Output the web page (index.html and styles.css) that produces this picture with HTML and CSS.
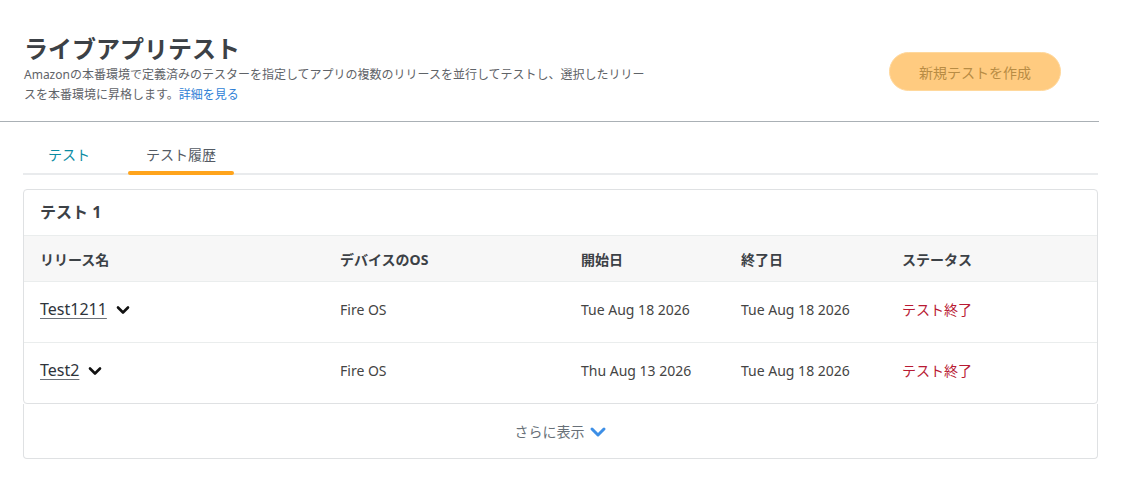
FILE: index.html
```html
<!DOCTYPE html>
<html lang="ja">
<head>
<meta charset="utf-8">
<title>ライブアプリテスト</title>
<link rel="stylesheet" href="styles.css">
</head>
<body>
<div class="page">
  <header class="page-header">
    <div class="intro">
      <h1 class="title">ライブアプリテスト</h1>
      <p class="desc">Amazonの本番環境で定義済みのテスターを指定してアプリの複数のリリースを並行してテストし、選択したリリー<br>スを本番環境に昇格します。<a class="link" href="#">詳細を見る</a></p>
    </div>
    <button class="btn-create" type="button">新規テストを作成</button>
  </header>

  <nav class="tabs">
    <a class="tab" href="#">テスト</a>
    <a class="tab active" href="#">テスト履歴</a>
  </nav>

  <section class="card">
    <h2 class="card-title">テスト 1</h2>
    <div class="row head">
      <div>リリース名</div>
      <div>デバイスのOS</div>
      <div>開始日</div>
      <div>終了日</div>
      <div>ステータス</div>
    </div>
    <div class="row">
      <div class="name"><a href="#">Test1211</a><svg class="chev" width="14" height="10" viewBox="0 0 14 10"><path d="M2 2.5 L7 7.5 L12 2.5" fill="none" stroke="#111" stroke-width="2.6" stroke-linecap="round" stroke-linejoin="round"/></svg></div>
      <div>Fire OS</div>
      <div>Tue Aug 18 2026</div>
      <div>Tue Aug 18 2026</div>
      <div class="status">テスト終了</div>
    </div>
    <div class="row last">
      <div class="name"><a href="#">Test2</a><svg class="chev" width="14" height="10" viewBox="0 0 14 10"><path d="M2 2.5 L7 7.5 L12 2.5" fill="none" stroke="#111" stroke-width="2.6" stroke-linecap="round" stroke-linejoin="round"/></svg></div>
      <div>Fire OS</div>
      <div>Thu Aug 13 2026</div>
      <div>Tue Aug 18 2026</div>
      <div class="status">テスト終了</div>
    </div>
  </section>
  <div class="more">
    <span>さらに表示</span>
    <svg class="more-chev" width="18" height="12" viewBox="0 0 18 12"><path d="M3 3 L9 9 L15 3" fill="none" stroke="#3d8fe6" stroke-width="3" stroke-linecap="round" stroke-linejoin="round"/></svg>
  </div>
</div>
</body>
</html>
```

FILE: styles.css
```css
* { box-sizing: border-box; }
body {
  margin: 0;
  background: #fff;
  font-family: "Noto Sans", "Noto Sans CJK JP", sans-serif;
  color: #444;
}
.page { width: 1099px; }

.page-header {
  display: flex;
  justify-content: space-between;
  align-items: flex-start;
  padding: 33px 38px 16px 24px;
  border-bottom: 1px solid #aab0b5;
}
.title {
  margin: 0;
  font-size: 24px;
  line-height: 32px;
  font-weight: 700;
  color: #3c4146;
}
.desc {
  margin: 0;
  font-size: 12px;
  line-height: 20px;
  color: #5f6368;
  white-space: nowrap;
}
.link { color: #2f7fd6; text-decoration: none; }
.btn-create {
  margin-top: 19px;
  width: 172px;
  height: 39px;
  border: 1px solid #ffd89c;
  border-radius: 20px;
  background: #ffcb80;
  color: #b88c44;
  font-family: inherit;
  font-size: 14px;
}

.tabs {
  display: flex;
  margin: 19px 1px 0 23px;
  padding-left: 7px;
  gap: 20px;
  border-bottom: 2px solid #e9ebed;
}
.tab {
  position: relative;
  padding: 0 18px 4px;
  line-height: 28px;
  font-size: 14px;
  color: #0b8ca3;
  text-decoration: none;
}
.tab.active { color: #545b64; }
.tab.active::after {
  content: "";
  position: absolute;
  left: 0;
  right: 0;
  bottom: -2px;
  height: 4px;
  border-radius: 2px;
  background: #ffa41c;
}

.card {
  margin: 14px 1px 0 23px;
  border: 1px solid #dfe1e3;
  border-radius: 4px;
}
.card-title {
  margin: 0;
  padding-left: 16px;
  line-height: 45px;
  font-size: 16px;
  font-weight: 700;
  color: #3c4146;
}
.row {
  display: grid;
  grid-template-columns: 300px 241px 160px 161px 1fr;
  align-items: center;
  padding: 0 0 6px 16px;
  height: 61px;
  border-bottom: 1px solid #eaeded;
  font-size: 14px;
  color: #444;
}
.row.last { border-bottom: 0; height: 60px; }
.row.head {
  height: 47px;
  padding-bottom: 0;
  background: #f7f7f7;
  border-top: 1px solid #eaeded;
  font-weight: 700;
  color: #3c4146;
}
.name { display: flex; align-items: center; gap: 9px; }
.name a {
  font-size: 16px;
  color: #2e343b;
  text-decoration: underline;
  text-decoration-color: #6b7178;
  text-decoration-thickness: 1px;
  text-underline-offset: 3px;
}
.chev { display: block; margin-top: 2px; }
.status { color: #b81a33; }

.more {
  margin: 0 1px 0 23px;
  height: 55px;
  display: flex;
  align-items: center;
  justify-content: center;
  gap: 4px;
  border: 1px solid #dfe1e3;
  border-top: 0;
  border-radius: 0 0 4px 4px;
  font-size: 14px;
  color: #687078;
}
.more-chev { display: block; margin-top: 1px; }
```
